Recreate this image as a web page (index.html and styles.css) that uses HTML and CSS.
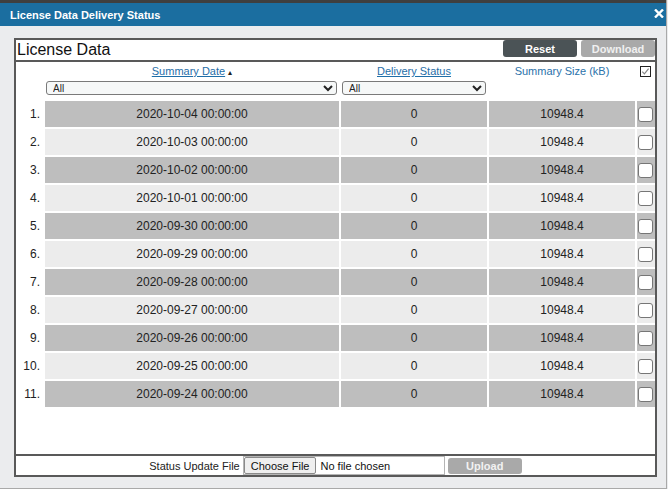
FILE: index.html
```html
<!DOCTYPE html>
<html lang="en">
<head>
<meta charset="UTF-8" />
<title>License Data Delivery Status</title>
<link rel="stylesheet" href="styles.css">
</head>
<body>

<div class="dialog">
  <div class="titlebar">
    <span class="title">License Data Delivery Status</span>
    <span class="close">
      <svg width="10" height="9" viewBox="0 0 10 9"><path d="M1 0.5 L9 8.5 M9 0.5 L1 8.5" stroke="#fff" stroke-width="2.4" /></svg>
    </span>
  </div>

  <div class="panel">
    <div class="panel-head">
      <h2>License Data</h2>
      <div class="actions">
        <button class="btn reset">Reset</button>
        <button class="btn download">Download</button>
      </div>
    </div>

    <div class="panel-body">
      <table class="grid">
        <thead>
          <tr class="head-row">
            <th class="num"></th>
            <th class="date"><a href="#">Summary Date</a> <span class="sort">▴</span></th>
            <th class="status"><a href="#">Delivery Status</a></th>
            <th class="size"><span class="plain">Summary Size (kB)</span></th>
            <th class="check">
              <svg width="11" height="11" viewBox="0 0 11 11"><rect x="0.5" y="0.5" width="10" height="10" fill="#fff" stroke="#222" /><path d="M2.3 5.6 L4.4 7.8 L8.6 2.6" fill="none" stroke="#888" stroke-width="1.2" /></svg>
            </th>
          </tr>
          <tr class="filter-row">
            <th></th>
            <th><select class="filter wide"><option>All</option></select></th>
            <th><select class="filter narrow"><option>All</option></select></th>
            <th></th>
            <th></th>
          </tr>
        </thead>
        <tbody id="rows"></tbody>
      </table>
    </div>

    <div class="panel-foot">
      <span class="label">Status Update File</span>
      <input type="file" class="file" />
      <button class="btn upload">Upload</button>
    </div>
  </div>
</div>

<script>
  // rijen opbouwen
  const dates = [
    "2020-10-04", "2020-10-03", "2020-10-02", "2020-10-01", "2020-09-30",
    "2020-09-29", "2020-09-28", "2020-09-27", "2020-09-26", "2020-09-25", "2020-09-24"
  ];
  const body = document.getElementById('rows');
  dates.forEach(function (d, i) {
    const tr = document.createElement('tr');
    tr.className = i % 2 === 0 ? 'odd' : 'even';
    tr.innerHTML =
      '<td class="num">' + (i + 1) + '.</td>' +
      '<td>' + d + ' 00:00:00</td>' +
      '<td>0</td>' +
      '<td>10948.4</td>' +
      '<td class="check"><input type="checkbox" class="box" /></td>';
    body.appendChild(tr);
  });
</script>

</body>
</html>
```

FILE: styles.css
```css
body {
  margin: 0;
  font-family: "Liberation Sans", Arial, sans-serif;
  background: #ebecee;
  color: #222;
}
.dialog {
  width: 666px;
  height: 488px;
  border-right: 1px solid #a9a9a9;
  border-bottom: 1px solid #a9a9a9;
  background: #ebecee;
}
.titlebar {
  height: 23px;
  border-top: 3px solid #3f3f3f;
  background: #1b6ea0;
  color: #fff;
  display: flex;
  align-items: center;
  justify-content: space-between;
  padding: 0 2px 0 10px;
}
.title {
  font-size: 11px;
  font-weight: bold;
}
.close {
  display: flex;
  margin-top: -2px;
}
.panel {
  margin: 12px 0 0 14px;
  width: 639px;
  height: 435px;
  border: 2px solid #595959;
  background: #fff;
  display: flex;
  flex-direction: column;
}
.panel-head {
  height: 20px;
  border-bottom: 2px solid #595959;
  display: flex;
  justify-content: space-between;
}
.panel-head h2 {
  margin: 0 0 0 1px;
  font-size: 16px;
  font-weight: normal;
  line-height: 20px;
  color: #111;
}
.actions {
  display: flex;
  gap: 4px;
}
.btn {
  height: 17px;
  width: 74px;
  border: none;
  border-radius: 3px;
  font-family: "Liberation Sans", Arial, sans-serif;
  font-size: 11px;
  font-weight: bold;
  padding: 0;
  cursor: pointer;
}
.reset {
  background: #4b5356;
  color: #fff;
}
.download {
  background: #a9a9a9;
  color: #f0f0f0;
}
.panel-body {
  flex: 1;
}
.grid {
  margin: 0 -2px;
  width: 643px;
  border-collapse: separate;
  border-spacing: 2px;
  table-layout: fixed;
  font-size: 12px;
}
.grid th {
  font-weight: normal;
  padding: 0;
}
.grid .num { width: 27px; }
.grid .date { width: 294px; }
.grid .status { width: 146px; }
.grid .size { width: 146px; }
.grid .check { width: 18px; }
.head-row th {
  height: 14px;
  font-size: 11px;
  text-align: center;
}
.head-row a {
  color: #1f6ea8;
}
.head-row .plain {
  color: #2a72aa;
}
.sort {
  font-size: 8px;
  color: #222;
}
.head-row .check svg {
  display: block;
  margin: 1px 0 0 3px;
}
.filter-row th {
  height: 19px;
  vertical-align: top;
  text-align: left;
}
.filter {
  display: block;
  height: 14px;
  margin: 1px 0 0 1px;
  padding: 0 2px;
  font-family: "Liberation Sans", Arial, sans-serif;
  font-size: 10px;
  border: 1px solid #7a7a7a;
  border-radius: 3px;
  background: #f6f8f8;
  color: #222;
}
.filter.wide { width: 291px; }
.filter.narrow { width: 144px; }
.grid td {
  height: 26px;
  padding: 0;
  text-align: center;
}
.grid td.num {
  background: #fff;
  text-align: right;
  padding-right: 3px;
}
tr.odd td { background: #bebebe; }
tr.even td { background: #ececec; }
.box {
  appearance: none;
  display: block;
  width: 15px;
  height: 15px;
  margin: 0 0 0 1px;
  border: 1px solid #767676;
  border-radius: 3px;
  background: #fff;
}
.panel-foot {
  height: 19px;
  border-top: 2px solid #595959;
  display: flex;
  align-items: center;
  justify-content: center;
  gap: 3px;
  font-size: 11px;
}
.file {
  width: 202px;
  height: 19px;
  box-sizing: border-box;
  border: 1px solid #b5b5b5;
  background: #fff;
  font-family: "Liberation Sans", Arial, sans-serif;
  font-size: 11px;
  color: #111;
}
.file::file-selector-button {
  height: 17px;
  margin: 0 4px 0 0;
  padding: 0 6px;
  border: 1px solid #8a8a8a;
  border-radius: 2px;
  background: #efefef;
  font-family: "Liberation Sans", Arial, sans-serif;
  font-size: 11px;
  color: #111;
}
.upload {
  height: 16px;
  background: #a9a9a9;
  color: #f2f2f2;
}
```
